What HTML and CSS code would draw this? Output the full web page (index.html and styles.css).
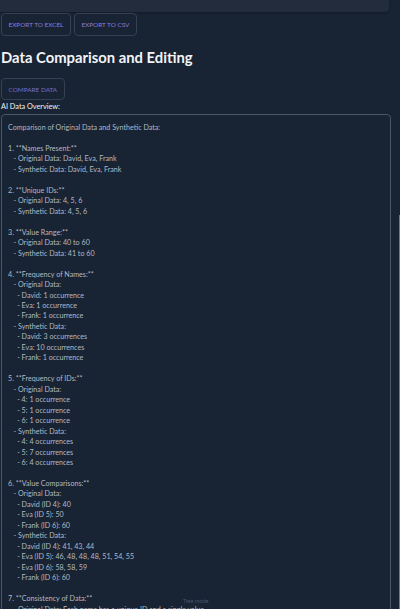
FILE: index.html
```html
<!DOCTYPE html>
<html>
<head>
<meta charset="utf-8">
<link rel="stylesheet" href="styles.css">
</head>
<body>
<div class="page">
  <div class="top-panel"></div>
  <div class="actions">
    <button class="btn">Export to Excel</button>
    <button class="btn">Export to CSV</button>
  </div>
  <h2 class="title">Data Comparison and Editing</h2>
  <div class="actions">
    <button class="btn btn-compare">Compare Data</button>
  </div>
  <div class="label">AI Data Overview:</div>
  <div class="overview">Comparison of Original Data and Synthetic Data:

1. **Names Present:**
   - Original Data: David, Eva, Frank
   - Synthetic Data: David, Eva, Frank

2. **Unique IDs:**
   - Original Data: 4, 5, 6
   - Synthetic Data: 4, 5, 6

3. **Value Range:**
   - Original Data: 40 to 60
   - Synthetic Data: 41 to 60

4. **Frequency of Names:**
   - Original Data:
     - David: 1 occurrence
     - Eva: 1 occurrence
     - Frank: 1 occurrence
   - Synthetic Data:
     - David: 3 occurrences
     - Eva: 10 occurrences
     - Frank: 1 occurrence

5. **Frequency of IDs:**
   - Original Data:
     - 4: 1 occurrence
     - 5: 1 occurrence
     - 6: 1 occurrence
   - Synthetic Data:
     - 4: 4 occurrences
     - 5: 7 occurrences
     - 6: 4 occurrences

6. **Value Comparisons:**
   - Original Data:
     - David (ID 4): 40
     - Eva (ID 5): 50
     - Frank (ID 6): 60
   - Synthetic Data:
     - David (ID 4): 41, 43, 44
     - Eva (ID 5): 46, 48, 48, 48, 51, 54, 55
     - Eva (ID 6): 58, 58, 59
     - Frank (ID 6): 60

7. **Consistency of Data:**
   - Original Data: Each name has a unique ID and a single value.
   - Synthetic Data: Names appear multiple times with varying values.</div>
  <div class="tree-mode">Tree mode</div>
  <div class="scroll-thumb"></div>
</div>
</body>
</html>
```
FILE: styles.css
```css
html, body {
  margin: 0;
  padding: 0;
  background: #182333;
  height: 100%;
  overflow: hidden;
}
body {
  font-family: Lato, "Open Sans", sans-serif;
  color: #e6e9ee;
}
.page {
  position: relative;
  padding-left: 1px;
  height: 609px;
  overflow: hidden;
}
.top-panel {
  width: 389px;
  height: 12px;
  margin-left: -1px;
  background: #222c3d;
  border-radius: 0 0 4px 0;
  box-shadow: 0 1px 2px rgba(0,0,0,0.25);
}
.actions {
  display: flex;
  gap: 3px;
  margin-top: 1px;
}
.btn {
  font-family: Lato, sans-serif;
  text-transform: uppercase;
  font-size: 6.4px;
  color: #8a7ddc;
  background: transparent;
  border: 1px solid #354055;
  border-radius: 4px;
  height: 23px;
  padding: 0 6.5px;
  letter-spacing: 0;
  margin: 0;
}
.btn-compare {
  height: 22px;
  padding: 0 6.5px;
  color: #7a6ec6;
}
.title {
  font-size: 14.8px;
  font-weight: 700;
  margin: 12px 0 12px 0;
  line-height: 18px;
  color: #f2f4f7;
}
.label {
  font-size: 7.3px;
  color: #f2f4f7;
  margin-top: 2px;
  line-height: 10px;
}
.overview {
  margin-top: 2px;
  width: 376px;
  height: 600px;
  border: 1px solid #4b5566;
  border-radius: 4px;
  padding: 8px 6px 6px;
  white-space: pre-wrap;
  font-size: 7.15px;
  line-height: 10.47px;
  color: #b3b9c3;
}
.tree-mode {
  position: absolute;
  left: 183px;
  top: 598px;
  font-size: 5.5px;
  color: #4a5566;
}
.scroll-thumb {
  position: absolute;
  right: 0;
  top: 215px;
  width: 1.5px;
  height: 400px;
  background: #7f63c8;
}
```
